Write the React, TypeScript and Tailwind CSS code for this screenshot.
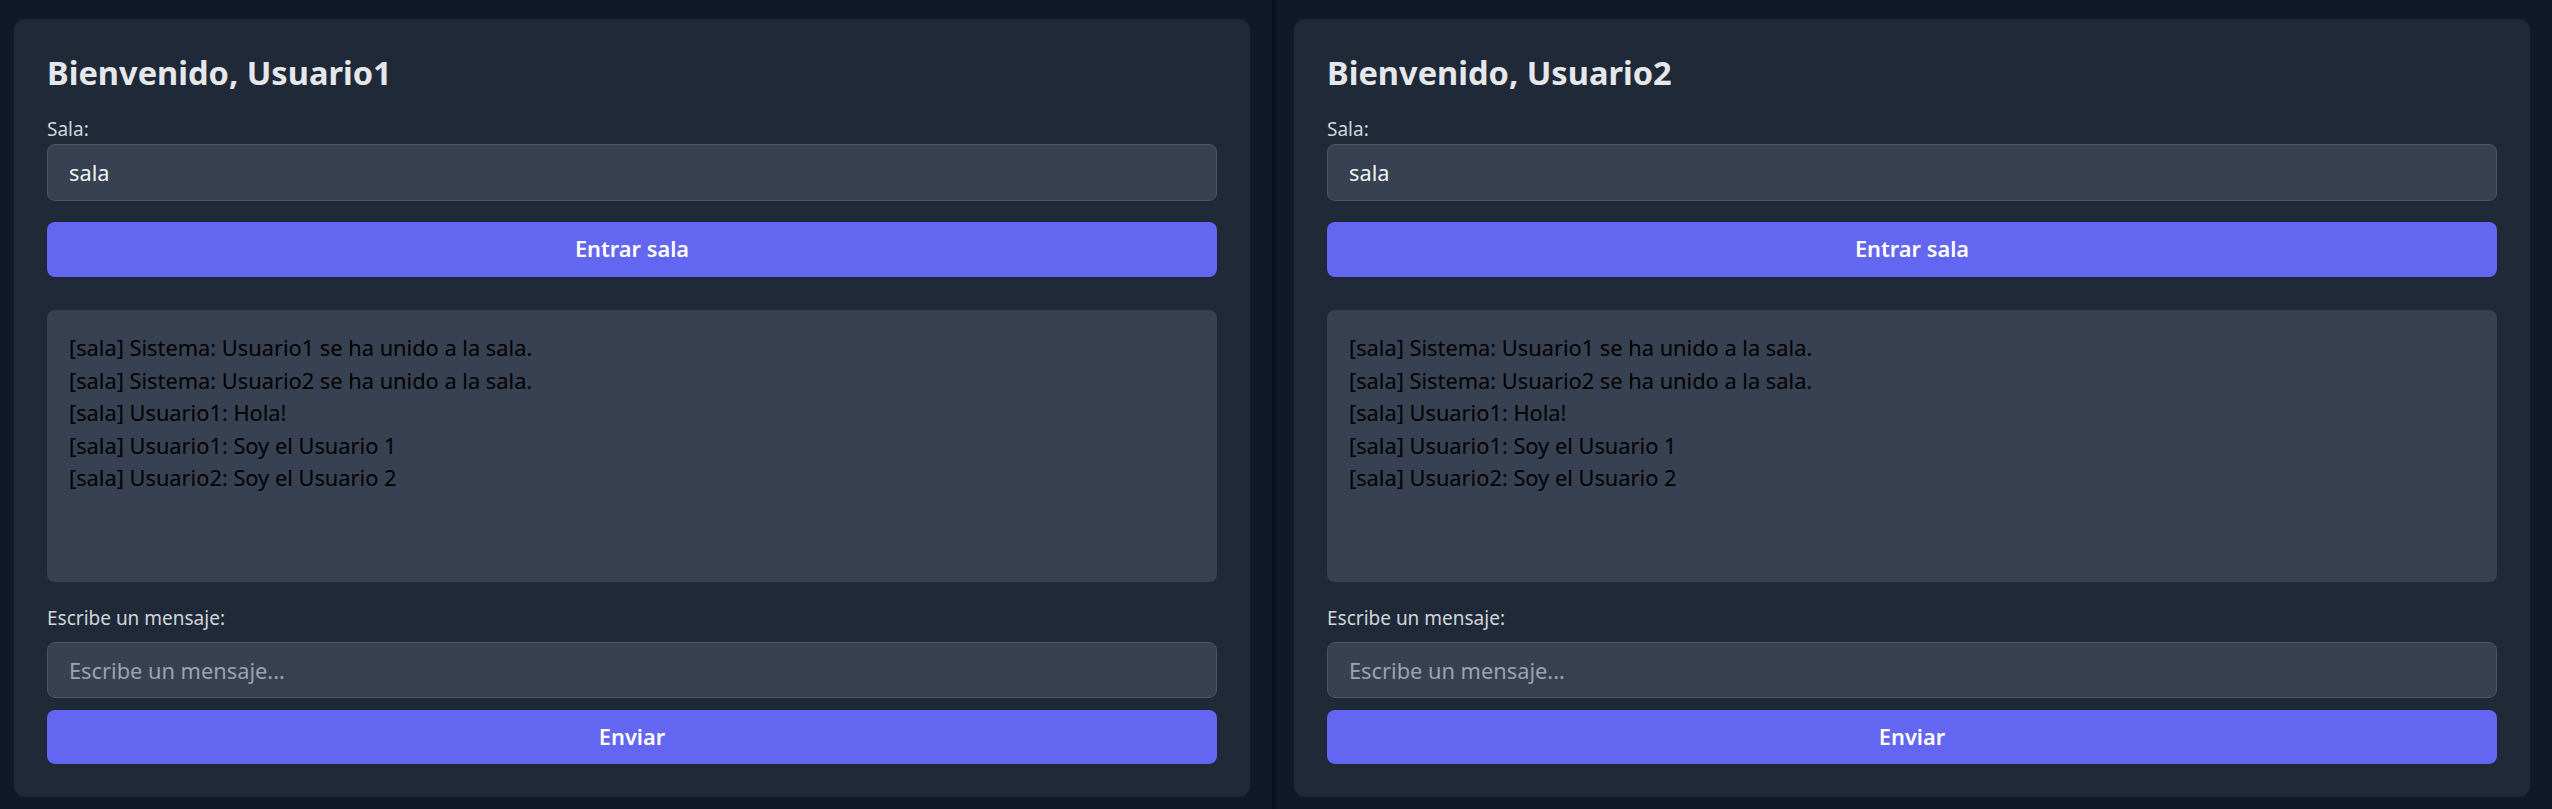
import React from 'react';

const messages = [
  '[sala] Sistema: Usuario1 se ha unido a la sala.',
  '[sala] Sistema: Usuario2 se ha unido a la sala.',
  '[sala] Usuario1: Hola!',
  '[sala] Usuario1: Soy el Usuario 1',
  '[sala] Usuario2: Soy el Usuario 2',
];

function ChatCard({ user }: { user: string }) {
  return (
    <div className="flex flex-col bg-[#1f2937] rounded-[11px] px-[33px] pt-[32px] pb-[33px] h-[778px]">
      <h2 className="text-[32.6px] leading-[43.5px] font-bold text-[#e5e7eb] mb-[21.5px]">Bienvenido, {user}</h2>

      {/* Room */}
      <label className="text-[19px] leading-[27px] text-[#d1d5db]">Sala:</label>
      <input
        defaultValue="sala"
        className="mt-px h-[57px] w-full rounded-[8px] border border-[#4b5563] bg-[#374151] px-[21px] text-[21.8px] text-[#f3f4f6] outline-none"
      />
      <button className="mt-[21px] h-[55px] w-full rounded-[8px] bg-[#6366f1] text-[21.8px] font-semibold text-white">
        Entrar sala
      </button>

      {/* Messages */}
      <div className="mt-[33px] h-[272px] rounded-[8px] bg-[#374151] p-[22px] text-[21.8px] leading-[32.6px] text-black">
        {messages.map((m, i) => (
          <div key={i}>{m}</div>
        ))}
      </div>

      <label className="mt-[23px] text-[19px] leading-[27px] text-[#d1d5db]">Escribe un mensaje:</label>
      <input
        placeholder="Escribe un mensaje..."
        className="mt-[10px] h-[56px] w-full rounded-[8px] border border-[#4b5563] bg-[#374151] px-[21px] text-[21.8px] text-[#f3f4f6] placeholder:text-[#9ca3af] outline-none"
      />
      <button className="mt-[12px] h-[54px] w-full rounded-[8px] bg-[#6366f1] text-[21.8px] font-semibold text-white">
        Enviar
      </button>
    </div>
  );
}

export default function App() {
  return (
    <div className="flex h-[809px] w-[2552px] bg-[#111827] font-['Noto_Sans',sans-serif] overflow-hidden">
      <div className="w-[1272px] shrink-0 pl-[14px] pr-[22px] pt-[19px]">
        <ChatCard user="Usuario1" />
      </div>
      <div className="w-[4px] shrink-0 bg-[#0c111d]" />
      <div className="flex-1 pl-[18px] pr-[22px] pt-[19px]">
        <ChatCard user="Usuario2" />
      </div>
    </div>
  );
}
